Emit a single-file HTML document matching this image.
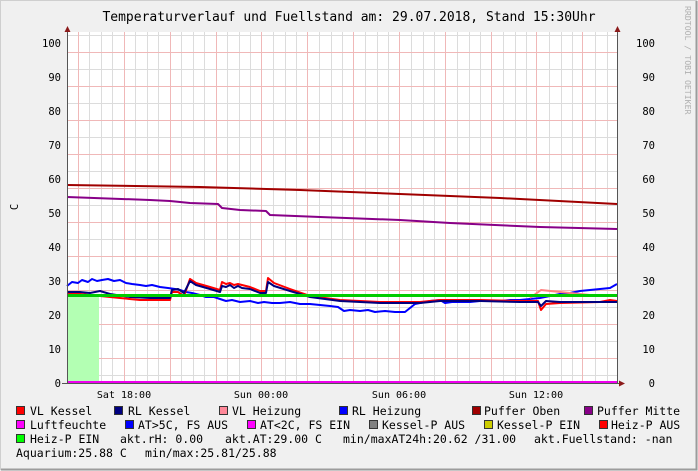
<!DOCTYPE html>
<html><head><meta charset="utf-8"><style>
body{margin:0;width:698px;height:471px;overflow:hidden;background:#f0f0f0}
svg{display:block}
text{font-family:"DejaVu Sans Mono","Liberation Mono",monospace;fill:#000}
</style></head><body>
<svg width="698" height="471" viewBox="0 0 698 471" xmlns="http://www.w3.org/2000/svg">
<rect x="0" y="0" width="698" height="471" fill="#f0f0f0"/>
<path d="M0.5 470V0.5H697" stroke="#cfcfcf" fill="none"/>
<path d="M1 469.5H696.5V1" stroke="#9c9c9c" stroke-width="2" fill="none"/>
<text x="349" y="21" font-size="13" text-anchor="middle">Temperaturverlauf und Fuellstand am: 29.07.2018, Stand 15:30Uhr</text>
<text transform="translate(685,6) rotate(90)" font-size="8.2" fill="#b0b0b0" style="fill:#b0b0b0">RRDTOOL / TOBI OETIKER</text>
<rect x="67" y="32" width="550" height="351" fill="#fff"/>
<g stroke="#dcdcdc" stroke-width="1">
<path d="M67 375.5H617M67 341.5H617M67 307.5H617M67 273.5H617M67 239.5H617M67 205.5H617M67 171.5H617M67 137.5H617M67 103.5H617M67 69.5H617M67 35.5H617"/>
<path d="M89.5 32V383M101.5 32V383M112.5 32V383M135.5 32V383M147.5 32V383M158.5 32V383M181.5 32V383M193.5 32V383M204.5 32V383M227.5 32V383M239.5 32V383M250.5 32V383M273.5 32V383M285.5 32V383M296.5 32V383M319.5 32V383M331.5 32V383M342.5 32V383M365.5 32V383M377.5 32V383M388.5 32V383M411.5 32V383M423.5 32V383M434.5 32V383M457.5 32V383M469.5 32V383M480.5 32V383M503.5 32V383M515.5 32V383M526.5 32V383M549.5 32V383M561.5 32V383M572.5 32V383M595.5 32V383M607.5 32V383"/>
</g>
<g stroke="#f0b8b8" stroke-width="1">
<path d="M67 358.5H617M67 324.5H617M67 290.5H617M67 256.5H617M67 222.5H617M67 188.5H617M67 154.5H617M67 120.5H617M67 86.5H617M67 52.5H617"/>
<path d="M78.5 32V383M124.5 32V383M170.5 32V383M216.5 32V383M261.5 32V383M307.5 32V383M353.5 32V383M399.5 32V383M445.5 32V383M491.5 32V383M536.5 32V383M582.5 32V383"/>
</g>
<rect x="67" y="296" width="32" height="87" fill="#b3ffb3"/>
<g fill="none" stroke-linejoin="round">
<polyline stroke="#a00000" stroke-width="2" points="67,185 200,187 300,190 400,194 500,198 617,204"/>
<polyline stroke="#880088" stroke-width="2" points="67,197 150,200 170,201 190,203 218,204 222,208 240,210 266,211 270,215 320,217 400,220 450,223 540,227 617,229"/>
<polyline stroke="#0000ff" stroke-width="2" points="67,286 72,282 78,283 82,280 88,282 92,279 97,281 102,280 108,279 114,281 120,280 126,283 132,284 140,285 146,286 152,285 160,287 168,288 175,289 180,290 186,292 192,293 200,295 206,297 214,297 220,299 226,301 232,300 240,302 250,301 258,303 264,302 272,303 280,303 290,302 300,304 310,304 320,305 330,306 338,307 344,311 350,310 360,311 368,310 375,312 385,311 395,312 405,312 410,308 415,304 420,303 430,301 440,300 445,303 452,302 460,302 470,302 480,301 490,301 500,301 510,300 520,300 530,299 540,298 550,296 560,294 570,293 580,291 590,290 600,289 610,288 617,284"/>
<polyline stroke="#0000ff" stroke-width="2" points="67,295 617,295"/>
<polyline stroke="#ff8080" stroke-width="2" points="530,298 541,290 560,292 600,296 617,296"/>
<polyline stroke="#ff0000" stroke-width="2" points="67,294 80,294 100,296 120,298 140,300 170,300 172,292 178,292 184,296 190,279 196,283 210,287 220,290 222,282 226,284 230,283 234,285 238,284 242,285 250,287 260,291 266,291 268,278 274,283 290,289 310,296 340,300 380,302 420,302 440,300 480,300 520,301 538,301 541,310 546,304 560,303 600,302 610,300 617,301"/>
<polyline stroke="#000080" stroke-width="2" points="67,292 80,292 90,293 100,291 110,294 130,297 150,298 170,298 172,290 178,289 184,293 190,281 196,285 210,289 220,292 222,286 226,287 230,285 234,288 238,286 242,288 250,289 260,293 266,293 268,282 274,286 290,291 310,297 340,301 380,303 420,303 440,301 480,301 520,302 538,302 541,306 546,301 560,302 600,302 617,302"/>
<polyline stroke="#00cc00" stroke-width="3" points="67,295.5 617,295.5"/>
<polyline stroke="#ee00ee" stroke-width="2" points="67,382 617,382"/>
</g>
<path d="M67.5 27V384M62 383.5H621" stroke="#555" stroke-width="1"/>
<path d="M617.5 27V383" stroke="#555"/>
<path d="M64.5 32L67.5 26L70.5 32Z M614.5 32L617.5 26L620.5 32Z M619 380.5L625 383.5L619 386.5Z" fill="#8b1a1a"/>
<g font-size="10.5" text-anchor="end">
<text x="61" y="47">100</text><text x="61" y="81">90</text><text x="61" y="115">80</text><text x="61" y="149">70</text><text x="61" y="183">60</text><text x="61" y="217">50</text><text x="61" y="251">40</text><text x="61" y="285">30</text><text x="61" y="319">20</text><text x="61" y="353">10</text><text x="61" y="387">0</text>
<text x="655" y="47">100</text><text x="655" y="81">90</text><text x="655" y="115">80</text><text x="655" y="149">70</text><text x="655" y="183">60</text><text x="655" y="217">50</text><text x="655" y="251">40</text><text x="655" y="285">30</text><text x="655" y="319">20</text><text x="655" y="353">10</text><text x="655" y="387">0</text>
</g>
<text transform="translate(18,207) rotate(-90)" font-size="10.5" text-anchor="middle">C</text>
<g font-size="10" text-anchor="middle">
<text x="124" y="398">Sat 18:00</text><text x="261" y="398">Sun 00:00</text><text x="399" y="398">Sun 06:00</text><text x="536" y="398">Sun 12:00</text>
</g>
<g stroke="#333" stroke-width="1">
<rect x="16.5" y="406.5" width="8" height="8" fill="#ff0000"/>
<rect x="114.5" y="406.5" width="8" height="8" fill="#000080"/>
<rect x="219.5" y="406.5" width="8" height="8" fill="#ff8899"/>
<rect x="339.5" y="406.5" width="8" height="8" fill="#0000ff"/>
<rect x="472.5" y="406.5" width="8" height="8" fill="#a00000"/>
<rect x="584.5" y="406.5" width="8" height="8" fill="#880088"/>
<rect x="16.5" y="420.5" width="8" height="8" fill="#ff00ff"/>
<rect x="125.5" y="420.5" width="8" height="8" fill="#0000ff"/>
<rect x="247.5" y="420.5" width="8" height="8" fill="#ff00ff"/>
<rect x="369.5" y="420.5" width="8" height="8" fill="#808080"/>
<rect x="484.5" y="420.5" width="8" height="8" fill="#cccc00"/>
<rect x="599.5" y="420.5" width="8" height="8" fill="#ff0000"/>
<rect x="16.5" y="434.5" width="8" height="8" fill="#00ff00"/>
</g>
<g font-size="11.5">
<text x="30" y="415">VL Kessel</text><text x="128" y="415">RL Kessel</text><text x="232" y="415">VL Heizung</text><text x="352" y="415">RL Heizung</text><text x="484" y="415">Puffer Oben</text><text x="597" y="415">Puffer Mitte</text>
<text x="30" y="429">Luftfeuchte</text><text x="138" y="429">AT&gt;5C, FS AUS</text><text x="260" y="429">AT&lt;2C, FS EIN</text><text x="382" y="429">Kessel-P AUS</text><text x="497" y="429">Kessel-P EIN</text><text x="611" y="429">Heiz-P AUS</text>
<text x="30" y="443">Heiz-P EIN</text><text x="120" y="443">akt.rH: 0.00</text><text x="225" y="443">akt.AT:29.00 C</text><text x="343" y="443">min/maxAT24h:20.62 /31.00</text><text x="534" y="443">akt.Fuellstand: -nan</text>
<text x="16" y="457">Aquarium:25.88 C</text><text x="145" y="457">min/max:25.81/25.88</text>
</g>
</svg>
</body></html>
